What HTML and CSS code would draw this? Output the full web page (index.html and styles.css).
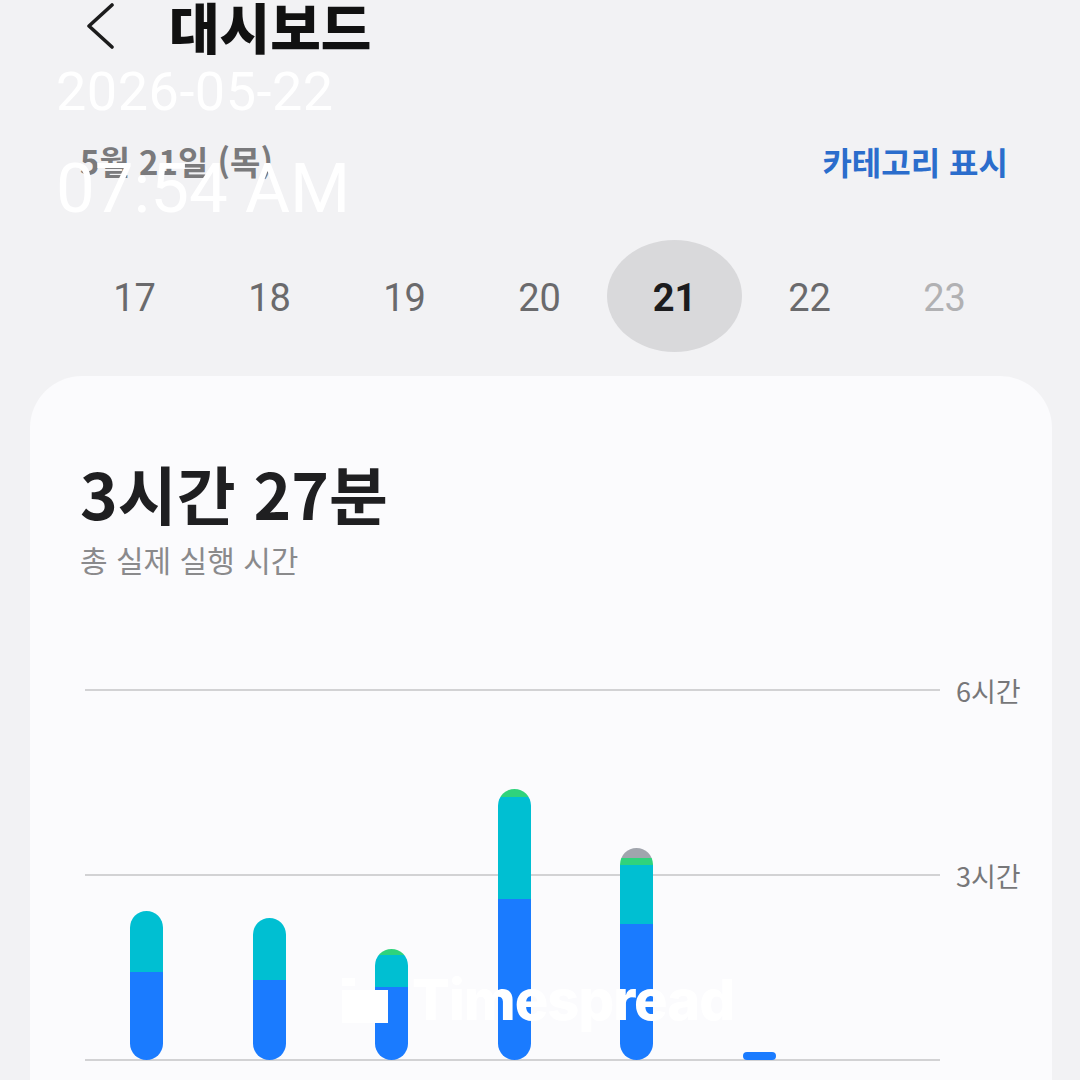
FILE: index.html
```html
<!DOCTYPE html>
<html lang="ko">
<head>
  <meta charset="UTF-8">
  <meta name="viewport" content="width=device-width, initial-scale=1">
  <title>대시보드</title>
  <link rel="stylesheet" href="styles.css">
</head>
<body>
  <div class="screen">
    <header class="topbar">
      <svg class="back" width="34" height="48" viewBox="0 0 34 48">
        <path d="M29 4 L6 25 L29 46" fill="none" stroke="#1c1c1c" stroke-width="3.6" stroke-linecap="round" stroke-linejoin="round"/>
      </svg>
      <h1>대시보드</h1>
    </header>

    <div class="date-row">
      <span class="date">5월 21일 (목)</span>
      <span class="toggle">카테고리 표시</span>
    </div>

    <div class="days">
      <span class="day">17</span>
      <span class="day">18</span>
      <span class="day">19</span>
      <span class="day">20</span>
      <span class="day active">21</span>
      <span class="day">22</span>
      <span class="day future">23</span>
    </div>

    <section class="card">
      <div class="total">3시간 27분</div>
      <div class="total-label">총 실제 실행 시간</div>

      <div class="chart">
        <div class="plot">
          <div class="grid-row"><div class="line"></div><span class="axis">6시간</span></div>
          <div class="grid-row"><div class="line"></div><span class="axis">3시간</span></div>
          <div class="grid-row"><div class="line"></div><span class="axis"></span></div>
        </div>
        <div class="bars">
          <div class="bar">
            <div class="seg cyan" style="height:61px"></div>
            <div class="seg blue" style="height:88px"></div>
          </div>
          <div class="bar">
            <div class="seg cyan" style="height:62px"></div>
            <div class="seg blue" style="height:80px"></div>
          </div>
          <div class="bar">
            <div class="seg green" style="height:6px"></div>
            <div class="seg cyan" style="height:32px"></div>
            <div class="seg blue" style="height:73px"></div>
          </div>
          <div class="bar">
            <div class="seg green" style="height:8px"></div>
            <div class="seg cyan" style="height:102px"></div>
            <div class="seg blue" style="height:161px"></div>
          </div>
          <div class="bar">
            <div class="seg gray" style="height:10px"></div>
            <div class="seg green" style="height:7px"></div>
            <div class="seg cyan" style="height:59px"></div>
            <div class="seg blue" style="height:136px"></div>
          </div>
          <div class="bar small">
            <div class="seg blue" style="height:8px"></div>
          </div>
        </div>
      </div>
    </section>

    <div class="stamp">
      <div class="stamp-date">2026-05-22</div>
      <div class="stamp-time">07:54 AM</div>
    </div>

    <div class="watermark">
      <svg width="46" height="45" viewBox="0 0 46 45">
        <rect x="0" y="0" width="13" height="8" fill="#fff"/>
        <rect x="0" y="12" width="46" height="33" fill="#fff"/>
      </svg>
      <span>Timespread</span>
    </div>
  </div>
</body>
</html>
```

FILE: styles.css
```css
:root {
  --page-bg: #f2f2f4;
  --card-bg: #fbfbfd;
  --text-dark: #1f1f21;
  --text-gray: #7a7a7c;
  --accent: #2b6dcc;
  --grid: #d2d2d4;
  --blue: #1a7bff;
  --cyan: #00bfd2;
  --green: #2fd37c;
  --gray: #a1a5ad;
}

body {
  margin: 0;
  background-color: var(--page-bg);
  font-family: Roboto, "Noto Sans CJK KR", sans-serif;
}

.screen {
  position: relative;
  width: 1080px;
  height: 1080px;
  overflow: hidden;
}

.topbar {
  display: flex;
  align-items: center;
  gap: 52px;
  padding-left: 83px;
  height: 56px;
  margin-top: -3px;
}

.back {
  display: block;
}

h1 {
  margin: 0;
  font-family: "Noto Sans CJK KR", sans-serif;
  font-size: 55px;
  font-weight: 900;
  line-height: 1;
  color: #111;
}

.date-row {
  display: flex;
  justify-content: space-between;
  align-items: center;
  padding: 0 72px 0 80px;
  margin-top: 86px;
  height: 44px;
}

.date {
  font-family: "Noto Sans CJK KR", sans-serif;
  font-size: 33px;
  font-weight: 700;
  color: var(--text-gray);
}

.toggle {
  font-family: "Noto Sans CJK KR", sans-serif;
  font-size: 32px;
  font-weight: 700;
  color: var(--accent);
}

.days {
  display: grid;
  grid-template-columns: repeat(7, 135px);
  padding-left: 67px;
  margin-top: 57px;
  height: 112px;
}

.day {
  display: flex;
  align-items: center;
  justify-content: center;
  padding-top: 4px;
  font-size: 38px;
  color: #6a6a6c;
}

.day.active {
  background-color: #d9d9db;
  border-radius: 50%;
  color: #1c1c1e;
  font-weight: 700;
}

.day.future {
  color: #b1b1b3;
}

.card {
  margin: 24px 28px 0 30px;
  height: 740px;
  background-color: var(--card-bg);
  border-radius: 52px 52px 0 0;
  padding: 75px 0 0 50px;
  box-sizing: border-box;
}

.total {
  font-family: "Noto Sans CJK KR", sans-serif;
  font-size: 64px;
  font-weight: 700;
  line-height: 82px;
  color: var(--text-dark);
}

.total-label {
  font-family: "Noto Sans CJK KR", sans-serif;
  font-size: 30px;
  color: #8a8a8c;
  margin-top: 4px;
}

.chart {
  position: relative;
  margin: 94px 0 0 5px;
}

.plot {
  display: flex;
  flex-direction: column;
  justify-content: space-between;
  height: 400px;
}

.grid-row {
  display: flex;
  align-items: center;
  height: 30px;
}

.line {
  width: 855px;
  height: 2px;
  background-color: var(--grid);
}

.axis {
  margin-left: 16px;
  font-family: "Noto Sans CJK KR", sans-serif;
  font-size: 27px;
  color: #777779;
}

.bars {
  position: absolute;
  left: 45px;
  bottom: 15px;
  display: flex;
  align-items: flex-end;
  gap: 89.5px;
}

.bar {
  display: flex;
  flex-direction: column;
  width: 33px;
  border-radius: 17px;
  overflow: hidden;
}

.bar.small {
  border-radius: 4px;
}

.seg.blue { background-color: var(--blue); }
.seg.cyan { background-color: var(--cyan); }
.seg.green { background-color: var(--green); }
.seg.gray { background-color: var(--gray); }

.stamp {
  position: absolute;
  left: 56px;
  top: 62px;
  color: #fff;
}

.stamp-date {
  font-size: 54px;
  line-height: 60px;
  letter-spacing: 0.5px;
}

.stamp-time {
  font-size: 69px;
  line-height: 80px;
  margin-top: 27px;
}

.watermark {
  position: absolute;
  left: 342px;
  top: 975px;
  display: flex;
  align-items: center;
  gap: 24px;
  color: #fff;
}

.watermark span {
  font-family: Inter, sans-serif;
  font-size: 56px;
  font-weight: 800;
  letter-spacing: -1px;
  line-height: 50px;
}
```
